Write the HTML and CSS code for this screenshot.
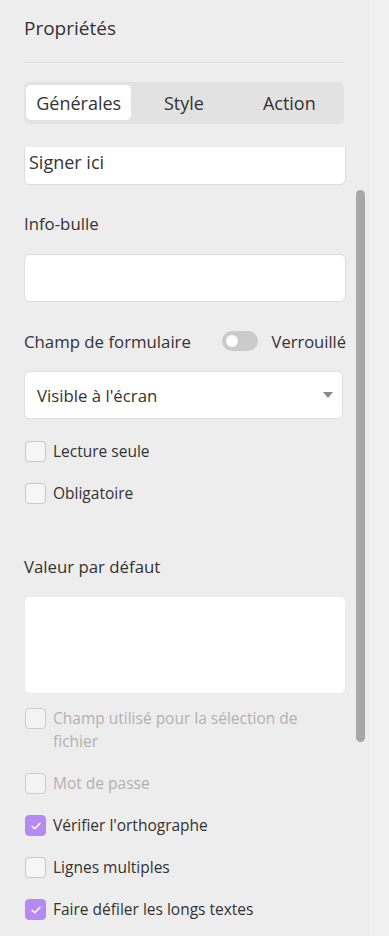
FILE: index.html
```html
<!DOCTYPE html>
<html lang="fr">
<head>
<meta charset="utf-8">
<title>Propriétés</title>
<link rel="stylesheet" href="styles.css">
</head>
<body>
<div class="page">
  <aside class="panel">
    <header class="panel-head">
      <h1 class="title">Propriétés</h1>
      <div class="divider"></div>
      <nav class="tabs">
        <span class="tab active">Générales</span>
        <span class="tab">Style</span>
        <span class="tab">Action</span>
      </nav>
    </header>
    <div class="scroll">
      <div class="content">
        <div class="input first">Signer ici</div>

        <div class="label">Info-bulle</div>
        <div class="input"></div>

        <div class="row">
          <span class="row-label">Champ de formulaire</span>
          <span class="toggle"><span class="knob"></span></span>
          <span class="row-label">Verrouillé</span>
        </div>

        <div class="select">
          <span>Visible à l'écran</span>
          <svg class="caret" width="10" height="6" viewBox="0 0 10 6"><path d="M0 0h10L5 6z" fill="#8a8a8a"/></svg>
        </div>

        <div class="checks">
          <label class="check"><span class="box"></span><span class="txt">Lecture seule</span></label>
          <label class="check"><span class="box"></span><span class="txt">Obligatoire</span></label>
        </div>

        <div class="label spaced">Valeur par défaut</div>
        <div class="textarea"></div>

        <div class="checks second">
          <label class="check disabled"><span class="box"></span><span class="txt narrow">Champ utilisé pour la sélection de fichier</span></label>
          <label class="check disabled"><span class="box"></span><span class="txt">Mot de passe</span></label>
          <label class="check"><span class="box on"><svg width="12" height="10" viewBox="0 0 12 10"><path d="M2 5.2l2.7 2.6L10 2.4" fill="none" stroke="#fff" stroke-width="1.5" stroke-linecap="round" stroke-linejoin="round"/></svg></span><span class="txt">Vérifier l'orthographe</span></label>
          <label class="check"><span class="box"></span><span class="txt">Lignes multiples</span></label>
          <label class="check"><span class="box on"><svg width="12" height="10" viewBox="0 0 12 10"><path d="M2 5.2l2.7 2.6L10 2.4" fill="none" stroke="#fff" stroke-width="1.5" stroke-linecap="round" stroke-linejoin="round"/></svg></span><span class="txt">Faire défiler les longs textes</span></label>
        </div>
      </div>
      <div class="scrollbar"></div>
    </div>
  </aside>
</div>
</body>
</html>
```
FILE: styles.css
```css
* { box-sizing: border-box; }
html, body { margin: 0; padding: 0; }
body {
  background: #f1f1f1;
  font-family: "Open Sans", "Noto Sans", sans-serif;
  color: #333;
  width: 389px;
  height: 936px;
  overflow: hidden;
}
.page { display: flex; height: 936px; }
.panel {
  width: 370px;
  height: 936px;
  background: #ededed;
  display: flex;
  flex-direction: column;
}
.panel-head { padding: 14px 0 0 24px; }
.title {
  margin: 0;
  font-size: 19px;
  font-weight: 400;
  line-height: 28px;
  color: #333;
}
.divider {
  height: 1px;
  width: 320px;
  background: #e3e3e3;
  margin-top: 20px;
}
.tabs {
  margin-top: 19px;
  width: 320px;
  height: 42px;
  background: #e2e2e2;
  border-radius: 6px;
  padding: 3px 2px 4px;
  display: grid;
  grid-template-columns: repeat(3, 1fr);
}
.tab {
  display: flex;
  align-items: center;
  justify-content: center;
  font-size: 18px;
  color: #333;
  border-radius: 5px;
}
.tab.active { background: #fff; }

.scroll {
  position: relative;
  margin-top: 23px;
  flex: 1;
  overflow: hidden;
}
.content {
  padding-left: 24px;
  width: 346px;
  display: flex;
  flex-direction: column;
}
.input {
  height: 48px;
  background: #fff;
  border: 1px solid #dcdcdc;
  border-radius: 6px;
  padding: 0 4px;
  font-size: 18px;
  display: flex;
  align-items: center;
}
.input.first { margin-top: -10px; padding-top: 2px; }
.label {
  font-size: 16.8px;
  line-height: 24px;
  margin-top: 27px;
  margin-bottom: 18px;
}
.label.spaced { margin-top: 50px; }
.row {
  display: flex;
  align-items: center;
  height: 24px;
  margin-top: 27px;
  font-size: 16.8px;
}
.row-label:first-child { flex: 1; }
.row-label:last-child { font-size: 16.5px; }
.toggle {
  position: relative;
  width: 36px;
  height: 20px;
  border-radius: 10px;
  background: #cbcbcb;
  margin-right: 14px;
}
.knob {
  position: absolute;
  left: 4px;
  top: 4px;
  width: 12px;
  height: 12px;
  border-radius: 50%;
  background: #fff;
}
.select {
  margin-top: 18px;
  width: 319px;
  height: 48px;
  background: #fff;
  border: 1px solid #e0e0e0;
  border-radius: 6px;
  display: flex;
  align-items: center;
  justify-content: space-between;
  padding: 0 9px 0 12px;
  font-size: 16.8px;
}
.checks {
  display: flex;
  flex-direction: column;
  gap: 19px;
  margin-top: 21px;
}
.checks.second { margin-top: 14px; }
.check {
  display: flex;
  align-items: flex-start;
  font-size: 15.5px;
  line-height: 23px;
}
.box {
  flex: none;
  width: 21px;
  height: 21px;
  margin: 1px 7px 0 1px;
  border: 1px solid #c9c9c9;
  border-radius: 4px;
  background: #f6f6f6;
  display: flex;
  align-items: center;
  justify-content: center;
}
.box.on { background: #b68af4; border-color: #b68af4; }
.check.disabled { color: #b2b2b2; }
.check.disabled .box { border-color: #cdcdcd; background: #f3f3f3; }
.txt.narrow { max-width: 265px; }
.textarea {
  height: 96px;
  margin-left: 1px;
  width: 320px;
  background: #fff;
  border-radius: 5px;
}
.scrollbar {
  position: absolute;
  left: 356px;
  top: 43px;
  width: 9px;
  height: 552px;
  background: #a7a7a7;
  border-radius: 5px;
}
```
